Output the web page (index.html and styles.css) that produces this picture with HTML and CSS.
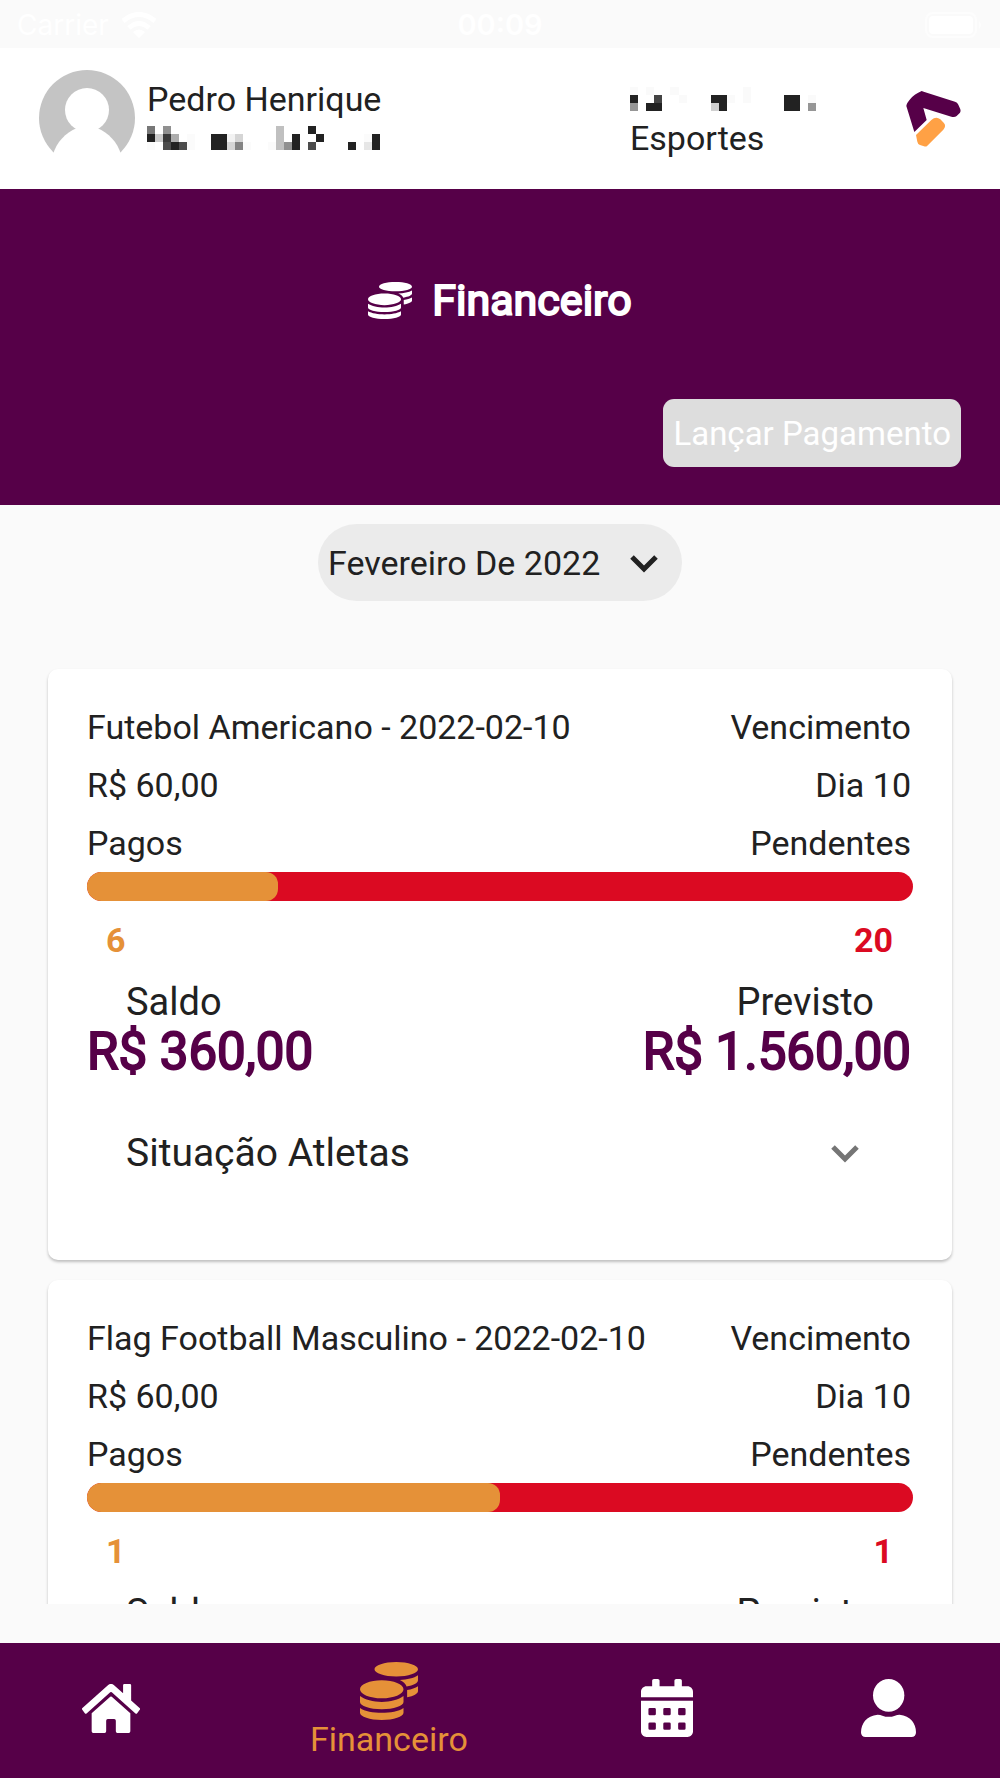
FILE: index.html
```html
<!DOCTYPE html>
<html lang="pt-BR">
<head>
<meta charset="utf-8">
<meta name="viewport" content="width=device-width, initial-scale=1">
<title>Financeiro</title>
<link rel="stylesheet" href="styles.css">
</head>
<body>
<svg class="sprite" aria-hidden="true">
  <symbol id="coins" viewBox="0 0 512 512" preserveAspectRatio="none">
    <path d="M0 405.3V448c0 35.3 86 64 192 64s192-28.700 192-64v-42.700C342.700 434.400 267.200 448 192 448S41.300 434.400 0 405.300zM320 128c106 0 192-28.700 192-64S426 0 320 0 128 28.700 128 64s86 64 192 64zM0 300.400V352c0 35.300 86 64 192 64s192-28.700 192-64v-51.600c-41.300 34-116.900 51.600-192 51.600S41.300 334.400 0 300.400zm416 11c57.300-11.100 96-31.700 96-55.400v-42.700c-23.200 16.400-57.300 27.600-96 34.500v63.600zM192 160C86 160 0 195.800 0 240s86 80 192 80 192-35.800 192-80-86-80-192-80zm219.300 56.300c60-10.800 100.700-32 100.700-56.300v-42.700c-35.500 25.100-96.500 38.600-160.700 41.800 29.500 14.300 51.200 33.500 60 57.200z"/>
  </symbol>
  <symbol id="chevron" viewBox="0 0 30 19">
    <path d="M3 3L15 15L27 3" fill="none" stroke="currentColor" stroke-width="5"/>
  </symbol>
</svg>

<div class="status">
  <span class="carrier">Carrier
    <svg width="36" height="26" viewBox="0 0 36 26" aria-hidden="true"><g fill="none" stroke="#fff" stroke-width="5"><path d="M2 9Q18 -4 34 9"/><path d="M8 16Q18 7 28 16"/></g><path d="M12 20Q18 15 24 20L18 26z" fill="#fff"/></svg>
  </span>
  <span class="time">00:09</span>
  <svg class="battery" width="58" height="26" viewBox="0 0 58 26" aria-hidden="true"><rect x="1" y="1" width="50" height="24" rx="7" fill="none" stroke="#fdfdfd" stroke-width="2"/><rect x="4" y="4" width="44" height="18" rx="4" fill="#fff"/><path d="M54 9q4 4 0 8z" fill="#fdfdfd"/></svg>
</div>

<header class="header">
  <svg class="avatar" viewBox="0 0 96 96" aria-hidden="true">
    <circle cx="48" cy="48" r="48" fill="#c4c4c4"/>
    <circle cx="48" cy="40" r="22" fill="#fff"/>
    <path d="M14 84C18 72 26 63 38 58H58C70 63 78 72 82 84V96H14z" fill="#fff"/>
  </svg>
  <div class="person">
    <div class="line">Pedro Henrique</div>
    <div class="line">
      <svg width="233" height="24" viewBox="0 0 29 3" preserveAspectRatio="none" shape-rendering="crispEdges" aria-hidden="true">
        <g fill="#222"><path d="M20 0h1v1h-1zM0 1h1v1h-1zM8 1h2v2h-2zM18 1h1v2h-1zM21 1h1v1h-1zM28 1h1v2h-1zM3 2h1v1h-1zM25 2h1v1h-1z"/></g>
        <path fill="#777" d="M0 0h1v1h-1z"/><path fill="#909090" d="M2 0h1v1h-1zM17 2h1v1h-1z"/>
        <path fill="#c0c0c0" d="M16 0h1v3h-1z"/><path fill="#ccc" d="M1 1h1v1h-1z"/>
        <path fill="#3a3a3a" d="M2 1h1v1h-1z"/><path fill="#adadad" d="M3 1h1v1h-1z"/>
        <path fill="#f2f2f2" d="M10 1h1v1h-1z"/><path fill="#d5d5d5" d="M11 1h1v1h-1zM10 2h1v1h-1z"/>
        <path fill="#4c4c4c" d="M2 2h1v1h-1zM4 2h1v1h-1zM20 2h1v1h-1z"/><path fill="#838383" d="M11 2h1v1h-1z"/>
        <path fill="#e6e6e6" d="M27 2h1v1h-1z"/><path fill="#fbfbfb" d="M5 1h1v2h-1zM0 2h1v1h-1zM12 2h1v1h-1zM15 2h1v1h-1zM27 1h1v1h-1z"/>
      </svg>
    </div>
  </div>
  <div class="club">
    <div class="line">
      <svg width="186" height="24" viewBox="0 0 23 3" preserveAspectRatio="none" shape-rendering="crispEdges" aria-hidden="true">
        <path fill="#222" d="M0 1h1v1h-1zM2 2h2v1h-2zM10 1h2v1h-2zM11 2h1v1h-1zM19 1h2v2h-2z"/>
        <path fill="#444" d="M3 1h1v1h-1z"/><path fill="#969696" d="M0 2h1v1h-1zM22 2h1v1h-1z"/>
        <path fill="#d0d0d0" d="M10 2h1v1h-1z"/>
        <path fill="#fafafa" d="M0 0h1v1h-1zM2 0h1v1h-1zM5 0h1v1h-1zM6 1h1v1h-1zM12 1h1v1h-1zM14 0h1v2h-1zM22 1h1v1h-1z"/>
      </svg>
    </div>
    <div class="line">Esportes</div>
  </div>
  <svg class="logo" viewBox="0 0 165 168" aria-hidden="true">
    <path fill="#560048" d="M47 0Q25 9 13 24Q1 38 1 45L25 123L62 87L52 51L136 77Q146 80 152 75L162 65Q165 60 163 55L157 41Q154 34 147 32L53 2z"/>
    <path fill="#ffa145" d="M30 132L76 87Q90 75 103 85L113 95Q122 104 112 116L64 164Q60 168 54 166L42 162Q35 159 34 152z"/>
  </svg>
</header>

<section class="banner">
  <h1><svg class="title-icon" aria-hidden="true"><use href="#coins"/></svg>Financeiro</h1>
  <button class="launch" type="button">Lançar Pagamento</button>
</section>

<main class="content">
  <div class="month">
    <select aria-label="Mês"><option>Fevereiro De 2022</option></select>
    <svg class="chevron" aria-hidden="true"><use href="#chevron"/></svg>
  </div>

  <article class="card">
    <div class="row"><span>Futebol Americano - 2022-02-10</span><span>Vencimento</span></div>
    <div class="row"><span>R$ 60,00</span><span>Dia 10</span></div>
    <div class="row"><span>Pagos</span><span>Pendentes</span></div>
    <div class="bar"><div class="paid" style="width:23.1%"></div></div>
    <div class="row counts"><span class="ok">6</span><span class="due">20</span></div>
    <div class="row totals"><span>Saldo</span><span>Previsto</span></div>
    <div class="row amounts"><span>R$ 360,00</span><span>R$ 1.560,00</span></div>
    <button class="expand" type="button">Situação Atletas<svg class="chevron" aria-hidden="true"><use href="#chevron"/></svg></button>
  </article>

  <article class="card">
    <div class="row"><span>Flag Football Masculino - 2022-02-10</span><span>Vencimento</span></div>
    <div class="row"><span>R$ 60,00</span><span>Dia 10</span></div>
    <div class="row"><span>Pagos</span><span>Pendentes</span></div>
    <div class="bar"><div class="paid" style="width:50%"></div></div>
    <div class="row counts"><span class="ok">1</span><span class="due">1</span></div>
    <div class="row totals"><span>Saldo</span><span>Previsto</span></div>
  </article>
</main>

<nav class="nav">
  <a href="#inicio" aria-label="Início"><svg width="58" height="49" viewBox="0 32 576 448" preserveAspectRatio="none"><path d="M280.370 148.260L96 300.110V464a16 16 0 0 0 16 16l112.060-.29a16 16 0 0 0 15.920-16V368a16 16 0 0 1 16-16h64a16 16 0 0 1 16 16v95.640a16 16 0 0 0 16 16.050L464 480a16 16 0 0 0 16-16V300L295.670 148.260a12.190 12.190 0 0 0-15.300 0zM571.600 251.470L488 182.560V44.050a12 12 0 0 0-12-12h-56a12 12 0 0 0-12 12v72.610L318.470 43a48 48 0 0 0-61 0L4.340 251.470a12 12 0 0 0-1.600 16.900l25.500 31A12 12 0 0 0 45.150 301l235.220-193.740a12.190 12.190 0 0 1 15.300 0L530.900 301a12 12 0 0 0 16.900-1.600l25.500-31a12 12 0 0 0-1.700-16.930z"/></svg></a>
  <a class="active" href="#financeiro" aria-current="page"><svg width="58" height="58"><use href="#coins"/></svg>Financeiro</a>
  <a href="#agenda" aria-label="Agenda"><svg width="52" height="58" viewBox="0 0 448 512" preserveAspectRatio="none"><path fill-rule="evenodd" d="M0 464c0 26.500 21.500 48 48 48h352c26.500 0 48-21.500 48-48V192H0zM76 256h40q12 0 12 12v40q0 12-12 12H76q-12 0-12-12v-40q0-12 12-12zM204 256h40q12 0 12 12v40q0 12-12 12h-40q-12 0-12-12v-40q0-12 12-12zM332 256h40q12 0 12 12v40q0 12-12 12h-40q-12 0-12-12v-40q0-12 12-12zM76 384h40q12 0 12 12v40q0 12-12 12H76q-12 0-12-12v-40q0-12 12-12zM204 384h40q12 0 12 12v40q0 12-12 12h-40q-12 0-12-12v-40q0-12 12-12zM332 384h40q12 0 12 12v40q0 12-12 12h-40q-12 0-12-12v-40q0-12 12-12zM400 64h-48V16c0-8.800-7.200-16-16-16h-32c-8.800 0-16 7.200-16 16v48H160V16c0-8.800-7.200-16-16-16h-32c-8.800 0-16 7.200-16 16v48H48C21.500 64 0 85.500 0 112v48h448v-48c0-26.500-21.500-48-48-48z"/></svg></a>
  <a href="#perfil" aria-label="Perfil"><svg width="55" height="58" viewBox="0 0 165 174"><ellipse cx="83" cy="49" rx="47" ry="49"/><path d="M50 107Q58 107 64 110Q83 117 102 110Q108 107 116 107Q140 110 153 125Q165 140 165 160Q165 174 151 174H14Q0 174 0 160Q0 140 12 125Q25 110 50 107z"/></svg></a>
</nav>
</body>
</html>
```
FILE: styles.css
```css
* {
  box-sizing: border-box;
}

body {
  display: flex;
  flex-direction: column;
  height: 100vh;
  margin: 0;
  background: #fafafa;
  color: #212121;
  font: 34px/39px Roboto, sans-serif;
}

svg {
  flex: none;
}

button,
select {
  border: 0;
  font: inherit;
  cursor: pointer;
}

.sprite {
  position: absolute;
  width: 0;
  height: 0;
}

.status {
  display: grid;
  grid-template-columns: 1fr auto 1fr;
  align-items: center;
  flex: none;
  height: 48px;
  padding: 2px 17px 0;
  color: #fff;
  font: 28px/32px Inter, sans-serif;
}

.carrier {
  display: flex;
  align-items: center;
  gap: 12px;
}

.time {
  font-size: 29px;
  font-weight: 600;
}

.battery {
  justify-self: end;
}

.header {
  display: flex;
  align-items: center;
  flex: none;
  height: 141px;
  padding: 0 39px;
  background: #fff;
}

.avatar {
  width: 96px;
  height: 96px;
  margin: 0 12px 2px 0;
}

.line {
  display: flex;
  align-items: center;
  height: 39px;
}

.club {
  margin: 0 90px 0 auto;
}

.logo {
  width: 55px;
  height: 56px;
}

.banner {
  display: flex;
  flex-direction: column;
  align-items: center;
  flex: none;
  padding: 85px 39px 38px;
  background: #560048;
  color: #fff;
}

.banner h1 {
  display: flex;
  align-items: center;
  gap: 20px;
  margin: 0 0 73px;
  font-size: 43px;
  font-weight: 400;
  line-height: 52px;
  -webkit-text-stroke: 2px currentColor;
}

.title-icon {
  width: 44px;
  height: 37px;
  fill: currentColor;
}

.launch {
  align-self: flex-end;
  height: 68px;
  padding: 0 10px;
  border-radius: 11px;
  background: #ddd;
  color: #fff;
  font-size: 33px;
}

.content {
  flex: 1;
  min-height: 0;
  margin-bottom: 39px;
  padding: 19px 48px 0;
  overflow-y: auto;
  scrollbar-width: none;
}

.month {
  position: relative;
  width: 364px;
  margin: 0 auto 68px;
}

.month select {
  display: block;
  width: 100%;
  height: 77px;
  padding: 2px 60px 0 10px;
  border-radius: 39px;
  background: #ebebeb;
  color: inherit;
  appearance: none;
}

.chevron {
  width: 30px;
  height: 19px;
}

.month .chevron {
  position: absolute;
  top: 30px;
  right: 23px;
  pointer-events: none;
}

.card {
  margin-bottom: 20px;
  padding: 29px 39px 59px;
  border-radius: 10px;
  background: #fff;
  box-shadow: 0 2px 3px rgba(0, 0, 0, 0.24);
}

.row {
  display: flex;
  justify-content: space-between;
  padding: 0 2px 0 0;
  line-height: 58px;
}

.bar {
  height: 29px;
  border-radius: 15px;
  background: #db0a22;
  overflow: hidden;
}

.paid {
  height: 100%;
  border-radius: 12px;
  background: #e59138;
}

.counts {
  margin-top: 10px;
  padding: 0 20px 0 19px;
  font-weight: 700;
}

.ok {
  color: #e59138;
}

.due {
  color: #db0a22;
}

.totals {
  margin-top: 13px;
  padding: 0 39px;
  font-size: 38px;
  line-height: 40px;
}

.amounts {
  color: #560048;
  font-size: 51px;
  line-height: 60px;
  -webkit-text-stroke: 2px currentColor;
}

.expand {
  display: flex;
  align-items: center;
  justify-content: space-between;
  width: 100%;
  height: 96px;
  margin-top: 23px;
  padding: 0 53px 0 39px;
  background: none;
  color: inherit;
  font-size: 39px;
}

.expand .chevron {
  color: #757575;
}

.nav {
  display: flex;
  flex: none;
  height: 135px;
  background: #560048;
}

.nav a {
  display: flex;
  flex: 2;
  flex-direction: column;
  align-items: center;
  justify-content: center;
  padding-bottom: 5px;
  color: #fff;
  fill: currentColor;
  text-decoration: none;
}

.nav .active {
  flex: 3;
  padding-bottom: 0;
  color: #e59138;
}
```
